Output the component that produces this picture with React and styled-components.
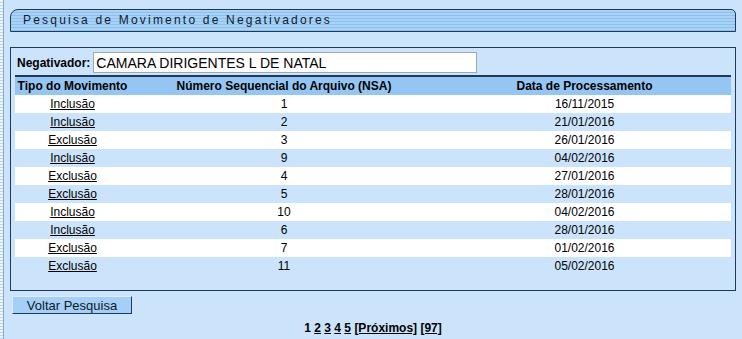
import React from 'react';
import styled, { createGlobalStyle } from 'styled-components';

const COLORS = {
  page: '#cbe4fb',
  navy: '#1f3a58',
  headRow: '#95c6f3',
  stripeLight: '#a9d2f7',
  stripeDark: '#8ec0ee',
  white: '#ffffff',
  text: '#000000',
};

const GlobalStyle = createGlobalStyle`
  html, body {
    margin: 0;
    background: ${COLORS.page};
    font-family: "Liberation Sans", Arial, sans-serif;
    color: ${COLORS.text};
  }
`;

const Page = styled.div`
  display: flex;
  min-height: 339px;
`;

const LeftRail = styled.div`
  width: 3px;
  border-right: 1px solid #8ea8c2;
  background: repeating-linear-gradient(
    to bottom,
    #eef6fd 0 2px,
    #b9d3ea 2px 3px
  );
`;

const Content = styled.div`
  flex: 1;
  padding: 9px 6px 0 6px;
`;

const Tab = styled.div`
  height: 21px;
  border: 1px solid ${COLORS.navy};
  border-radius: 8px 5px 0 0;
  background: repeating-linear-gradient(
    to bottom,
    ${COLORS.stripeLight} 0 2px,
    ${COLORS.stripeDark} 2px 3px
  );
`;

const Title = styled.h1`
  margin: 0;
  padding-left: 12px;
  font-size: 12px;
  font-weight: normal;
  line-height: 21px;
  letter-spacing: 2.2px;
  color: #10202f;
`;

const Panel = styled.div`
  margin-top: 15px;
  border: 1px solid ${COLORS.navy};
  padding: 2px 4px 15px;
`;

const FieldRow = styled.div`
  display: flex;
  align-items: center;
  height: 25px;
  padding-left: 2px;
  gap: 3px;
`;

const Label = styled.label`
  font-size: 12px;
  font-weight: bold;
`;

const Input = styled.input`
  box-sizing: border-box;
  width: 384px;
  height: 21px;
  padding: 0 2px;
  border: 1px solid #a0a8b0;
  background: ${COLORS.white};
  font-family: "Liberation Sans", Arial, sans-serif;
  font-size: 14px;
  color: ${COLORS.text};
`;

const Table = styled.table`
  width: 100%;
  border-collapse: collapse;
  border-top: 2px solid ${COLORS.navy};
  font-size: 12px;
  table-layout: fixed;
`;

const HeadCell = styled.th`
  height: 18px;
  padding: 0;
  background: ${COLORS.headRow};
  font-weight: bold;
  text-align: center;
`;

const Row = styled.tr`
  background: ${(p) => (p.$odd ? COLORS.white : COLORS.page)};
`;

const Cell = styled.td`
  height: 18px;
  padding: 0;
  text-align: center;
`;

const Link = styled.a`
  color: ${COLORS.text};
  text-decoration: underline;
  cursor: pointer;
`;

const Button = styled.button`
  display: block;
  margin: 5px 0 0 2px;
  width: 120px;
  height: 18px;
  padding: 0;
  background: #a5cff6;
  border: 1px solid;
  border-color: #d8ecfd ${COLORS.navy} ${COLORS.navy} #d8ecfd;
  font-family: "Liberation Sans", Arial, sans-serif;
  font-size: 13px;
  color: #0d1a28;
`;

const Pager = styled.div`
  margin-top: 7px;
  text-align: center;
  font-size: 12px;
  font-weight: bold;
  line-height: 14px;
`;

const rows = [
  ['Inclusão', 1, '16/11/2015'],
  ['Inclusão', 2, '21/01/2016'],
  ['Exclusão', 3, '26/01/2016'],
  ['Inclusão', 9, '04/02/2016'],
  ['Exclusão', 4, '27/01/2016'],
  ['Exclusão', 5, '28/01/2016'],
  ['Inclusão', 10, '04/02/2016'],
  ['Inclusão', 6, '28/01/2016'],
  ['Exclusão', 7, '01/02/2016'],
  ['Exclusão', 11, '05/02/2016'],
];

export default function App() {
  return (
    <>
      <GlobalStyle />
      <Page>
        <LeftRail />
        <Content>
          <Tab>
            <Title>Pesquisa de Movimento de Negativadores</Title>
          </Tab>
          <Panel>
            <FieldRow>
              <Label>Negativador:</Label>
              <Input readOnly value="CAMARA DIRIGENTES L DE NATAL" />
            </FieldRow>
            <Table>
              <colgroup>
                <col style={{ width: 115 }} />
                <col style={{ width: 308 }} />
                <col />
              </colgroup>
              <thead>
                <tr>
                  <HeadCell>Tipo do Movimento</HeadCell>
                  <HeadCell>Número Sequencial do Arquivo (NSA)</HeadCell>
                  <HeadCell>Data de Processamento</HeadCell>
                </tr>
              </thead>
              <tbody>
                {rows.map(([tipo, nsa, data], i) => (
                  <Row key={i} $odd={i % 2 === 0}>
                    <Cell>
                      <Link>{tipo}</Link>
                    </Cell>
                    <Cell>{nsa}</Cell>
                    <Cell>{data}</Cell>
                  </Row>
                ))}
              </tbody>
            </Table>
          </Panel>
          <Button>Voltar Pesquisa</Button>
          <Pager>
            1 <Link>2</Link> <Link>3</Link> <Link>4</Link> <Link>5</Link>{' '}
            <Link>[Próximos]</Link> <Link>[97]</Link>
          </Pager>
        </Content>
      </Page>
    </>
  );
}
